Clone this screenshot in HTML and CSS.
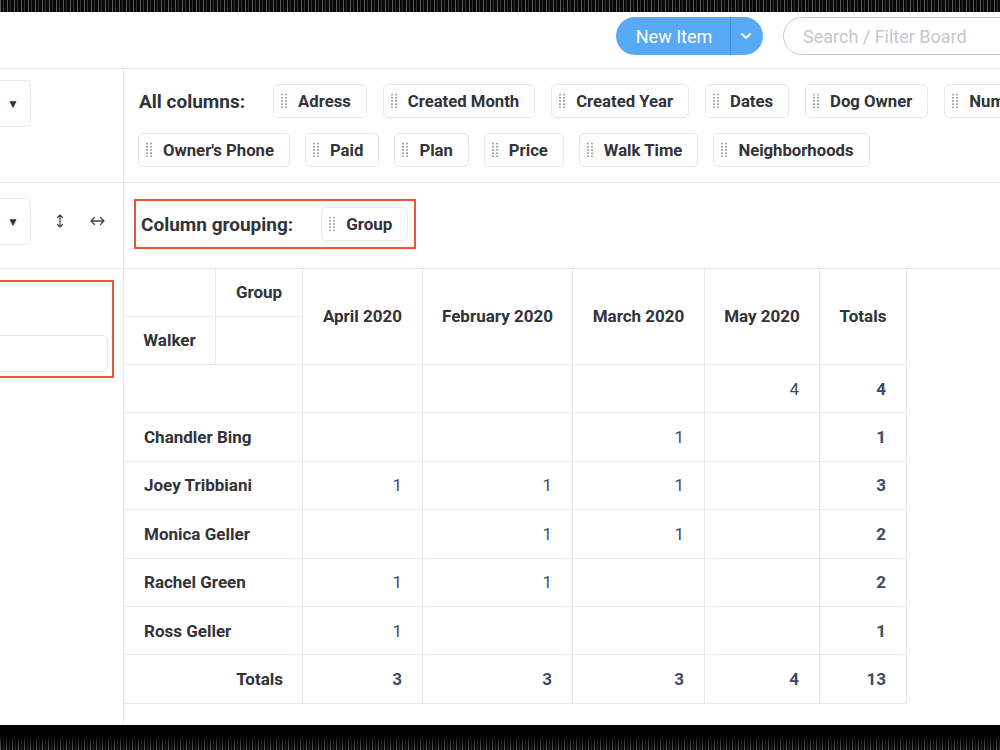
FILE: index.html
```html
<!DOCTYPE html>
<html>
<head>
<meta charset="utf-8">
<link rel="stylesheet" href="styles.css">
</head>
<body>
<div class="noise noise-top"></div>
<div class="app">
  <header class="topbar">
    <div class="btn-group">
      <span class="btn-main">New Item</span>
      <span class="btn-caret">
        <svg width="12" height="8" viewBox="0 0 12 8"><path d="M2 2 L6 6 L10 2" fill="none" stroke="#fff" stroke-width="2" stroke-linecap="round" stroke-linejoin="round"/></svg>
      </span>
    </div>
    <div class="search">Search / Filter Board</div>
  </header>
  <div class="workspace">
    <div class="cell left s1">
      <div class="dropdown"><span class="tri">▼</span></div>
    </div>
    <div class="cell right s1">
      <div class="chip-row">
        <span class="label">All columns:</span>
        <span class="chip"><i class="handle"></i>Adress</span>
        <span class="chip"><i class="handle"></i>Created Month</span>
        <span class="chip"><i class="handle"></i>Created Year</span>
        <span class="chip"><i class="handle"></i>Dates</span>
        <span class="chip"><i class="handle"></i>Dog Owner</span>
        <span class="chip"><i class="handle"></i>Number</span>
      </div>
      <div class="chip-row second">
        <span class="chip"><i class="handle"></i>Owner's Phone</span>
        <span class="chip"><i class="handle"></i>Paid</span>
        <span class="chip"><i class="handle"></i>Plan</span>
        <span class="chip"><i class="handle"></i>Price</span>
        <span class="chip"><i class="handle"></i>Walk Time</span>
        <span class="chip"><i class="handle"></i>Neighborhoods</span>
      </div>
    </div>
    <div class="cell left s2">
      <div class="dropdown"><span class="tri">▼</span></div>
      <svg class="ico-v" width="8" height="14" viewBox="0 0 8 14"><path d="M4 1 V13 M1.5 3.5 L4 1 L6.5 3.5 M1.5 10.5 L4 13 L6.5 10.5" fill="none" stroke="#444" stroke-width="1.2" stroke-linecap="round" stroke-linejoin="round"/></svg>
      <svg class="ico-h" width="15" height="10" viewBox="0 0 15 10"><path d="M1 5 H14 M4.5 1.5 L1 5 L4.5 8.5 M10.5 1.5 L14 5 L10.5 8.5" fill="none" stroke="#444" stroke-width="1.3" stroke-linecap="round" stroke-linejoin="round"/></svg>
    </div>
    <div class="cell right s2">
      <div class="grouping">
        <span class="label">Column grouping:</span>
        <span class="chip"><i class="handle"></i>Group</span>
      </div>
    </div>
    <div class="cell left s3">
      <div class="red-box">
        <div class="input"></div>
      </div>
    </div>
    <div class="cell right s3">
      <table class="pivot">
        <colgroup>
          <col style="width:92px"><col style="width:87px"><col style="width:120px"><col style="width:150px"><col style="width:132px"><col style="width:115px"><col style="width:87px">
        </colgroup>
        <thead>
          <tr class="hr">
            <th></th><th>Group</th>
            <th rowspan="2">April 2020</th><th rowspan="2">February 2020</th><th rowspan="2">March 2020</th><th rowspan="2">May 2020</th><th rowspan="2">Totals</th>
          </tr>
          <tr class="hr">
            <th>Walker</th><th></th>
          </tr>
        </thead>
        <tbody>
          <tr><td class="name" colspan="2"></td><td class="num"></td><td class="num"></td><td class="num"></td><td class="num">4</td><td class="num tot">4</td></tr>
          <tr><td class="name" colspan="2">Chandler Bing</td><td class="num"></td><td class="num"></td><td class="num">1</td><td class="num"></td><td class="num tot">1</td></tr>
          <tr><td class="name" colspan="2">Joey Tribbiani</td><td class="num">1</td><td class="num">1</td><td class="num">1</td><td class="num"></td><td class="num tot">3</td></tr>
          <tr><td class="name" colspan="2">Monica Geller</td><td class="num"></td><td class="num">1</td><td class="num">1</td><td class="num"></td><td class="num tot">2</td></tr>
          <tr><td class="name" colspan="2">Rachel Green</td><td class="num">1</td><td class="num">1</td><td class="num"></td><td class="num"></td><td class="num tot">2</td></tr>
          <tr><td class="name" colspan="2">Ross Geller</td><td class="num">1</td><td class="num"></td><td class="num"></td><td class="num"></td><td class="num tot">1</td></tr>
          <tr><td class="name totals" colspan="2">Totals</td><td class="num tot">3</td><td class="num tot">3</td><td class="num tot">3</td><td class="num tot">4</td><td class="num tot">13</td></tr>
        </tbody>
      </table>
    </div>
  </div>
</div>
<div class="noise noise-bottom"></div>
</body>
</html>
```
FILE: styles.css
```css
* { box-sizing: border-box; }
html, body { margin: 0; padding: 0; background: #fff; }
body {
  width: 1000px;
  height: 750px;
  overflow: hidden;
  font-family: Roboto, "Liberation Sans", sans-serif;
  color: #323338;
}
.noise {
  background-color: #0b0b0b;
  background-image:
    repeating-linear-gradient(90deg, rgba(160,160,160,.55) 0 1px, transparent 1px 3px, rgba(90,90,90,.5) 3px 4px, transparent 4px 7px),
    repeating-linear-gradient(0deg, rgba(0,0,0,.6) 0 1px, transparent 1px 2px);
}
.noise-top { height: 12px; }
.noise-bottom {
  height: 25px;
  background-image:
    linear-gradient(180deg, #000 0 40%, rgba(0,0,0,0) 100%),
    repeating-linear-gradient(90deg, rgba(170,170,170,.6) 0 1px, transparent 1px 3px, rgba(90,90,90,.5) 3px 4px, transparent 4px 6px),
    repeating-linear-gradient(0deg, rgba(0,0,0,.6) 0 1px, transparent 1px 2px);
}
.app {
  height: 713px;
  display: flex;
  flex-direction: column;
  overflow: hidden;
}
.topbar {
  height: 57px;
  flex: none;
  border-bottom: 1px solid #e6e9ef;
  display: flex;
  justify-content: flex-end;
  align-items: flex-start;
  padding-top: 5px;
  gap: 20px;
}
.btn-group {
  display: flex;
  height: 38px;
  border-radius: 19px;
  background: #58a9f6;
  color: #fff;
  overflow: hidden;
  flex: none;
}
.btn-main {
  width: 115px;
  display: flex;
  align-items: center;
  justify-content: center;
  font-size: 18px;
  padding-left: 2px;
  border-right: 1px solid #3f8fdb;
}
.btn-caret {
  width: 32px;
  display: flex;
  align-items: center;
  justify-content: center;
  padding-right: 3px;
}
.search {
  width: 240px;
  margin-right: -23px;
  height: 38px;
  flex: none;
  border: 1px solid #c9cbd2;
  border-radius: 19px;
  padding-left: 19px;
  display: flex;
  align-items: center;
  font-size: 18px;
  color: #c5c7cf;
}
.workspace {
  flex: 1;
  display: grid;
  grid-template-columns: 124px 1fr;
  grid-template-rows: 114px 86px 1fr;
}
.cell { border-bottom: 1px solid #e6e9ef; min-width: 0; overflow: hidden; }
.cell.left { border-right: 1px solid #e6e9ef; }
.cell.s3 { border-bottom: none; }

.dropdown {
  width: 40px;
  height: 47px;
  margin-left: -9px;
  border: 1px solid #e6e9ef;
  border-radius: 5px;
  display: flex;
  align-items: center;
  justify-content: flex-end;
  padding-right: 11px;
  flex: none;
}
.tri { font-size: 12px; color: #333; line-height: 1; }
.left.s1 { padding-top: 11px; }
.left.s2 {
  padding-top: 15px;
  display: flex;
  align-items: flex-start;
}
.ico-v { margin-left: 25px; margin-top: 16px; flex: none; }
.ico-h { margin-left: 26px; margin-top: 18px; flex: none; }

.right.s1 { padding: 15px 0 0 14px; }
.chip-row {
  display: flex;
  gap: 16px;
  align-items: center;
  white-space: nowrap;
}
.chip-row.second { margin-top: 15px; gap: 15px; }
.label {
  font-size: 19px;
  font-weight: 700;
  color: #323338;
  margin-left: 1px;
  margin-right: 12px;
}
.chip {
  flex: none;
  height: 34px;
  display: inline-flex;
  align-items: center;
  border: 1px solid #e4e6ec;
  border-radius: 5px;
  padding: 0 15px 0 7px;
  font-size: 16.7px;
  font-weight: 700;
  color: #323338;
}
.handle {
  width: 6px;
  height: 16px;
  margin-right: 11px;
  background-image: radial-gradient(circle, #a3a5ad 0.9px, transparent 1.2px);
  background-size: 4px 3.2px;
  background-position: -1px 0;
  flex: none;
}
.right.s2 { padding: 16px 0 0 10px; }
.grouping {
  display: inline-flex;
  align-items: center;
  border: 2px solid #ef5535;
  height: 50px;
  padding: 0 6px 0 5px;
}
.grouping .label { margin-right: 28px; margin-left: 0; }
.grouping .chip { font-size: 17px; }

.red-box {
  margin-top: 11px;
  margin-left: -10px;
  width: 124px;
  height: 98px;
  border: 2px solid #ef5535;
  padding: 53px 4px 0 0;
}
.input {
  height: 37px;
  border: 1px solid #e4e6ec;
  border-radius: 5px;
}

.pivot {
  table-layout: fixed;
  width: 783px;
  border-collapse: separate;
  border-spacing: 0;
}
.pivot th, .pivot td {
  border-right: 1px solid #e6e9ef;
  border-bottom: 1px solid #e6e9ef;
  padding: 0;
}
.pivot th {
  font-size: 17px;
  font-weight: 700;
  color: #323338;
  text-align: center;
  padding-bottom: 1px;
}
.pivot tr.hr { height: 48px; }
.pivot tbody tr { height: 48.4px; }
.pivot td.name {
  font-size: 17px;
  font-weight: 700;
  color: #323338;
  padding-left: 20px;
}
.pivot td.name.totals { text-align: right; padding-right: 19px; }
.pivot td.num {
  text-align: right;
  padding-right: 20px;
  font-size: 17px;
  color: #3d4a6c;
}
.pivot td.tot { font-weight: 700; }
```
